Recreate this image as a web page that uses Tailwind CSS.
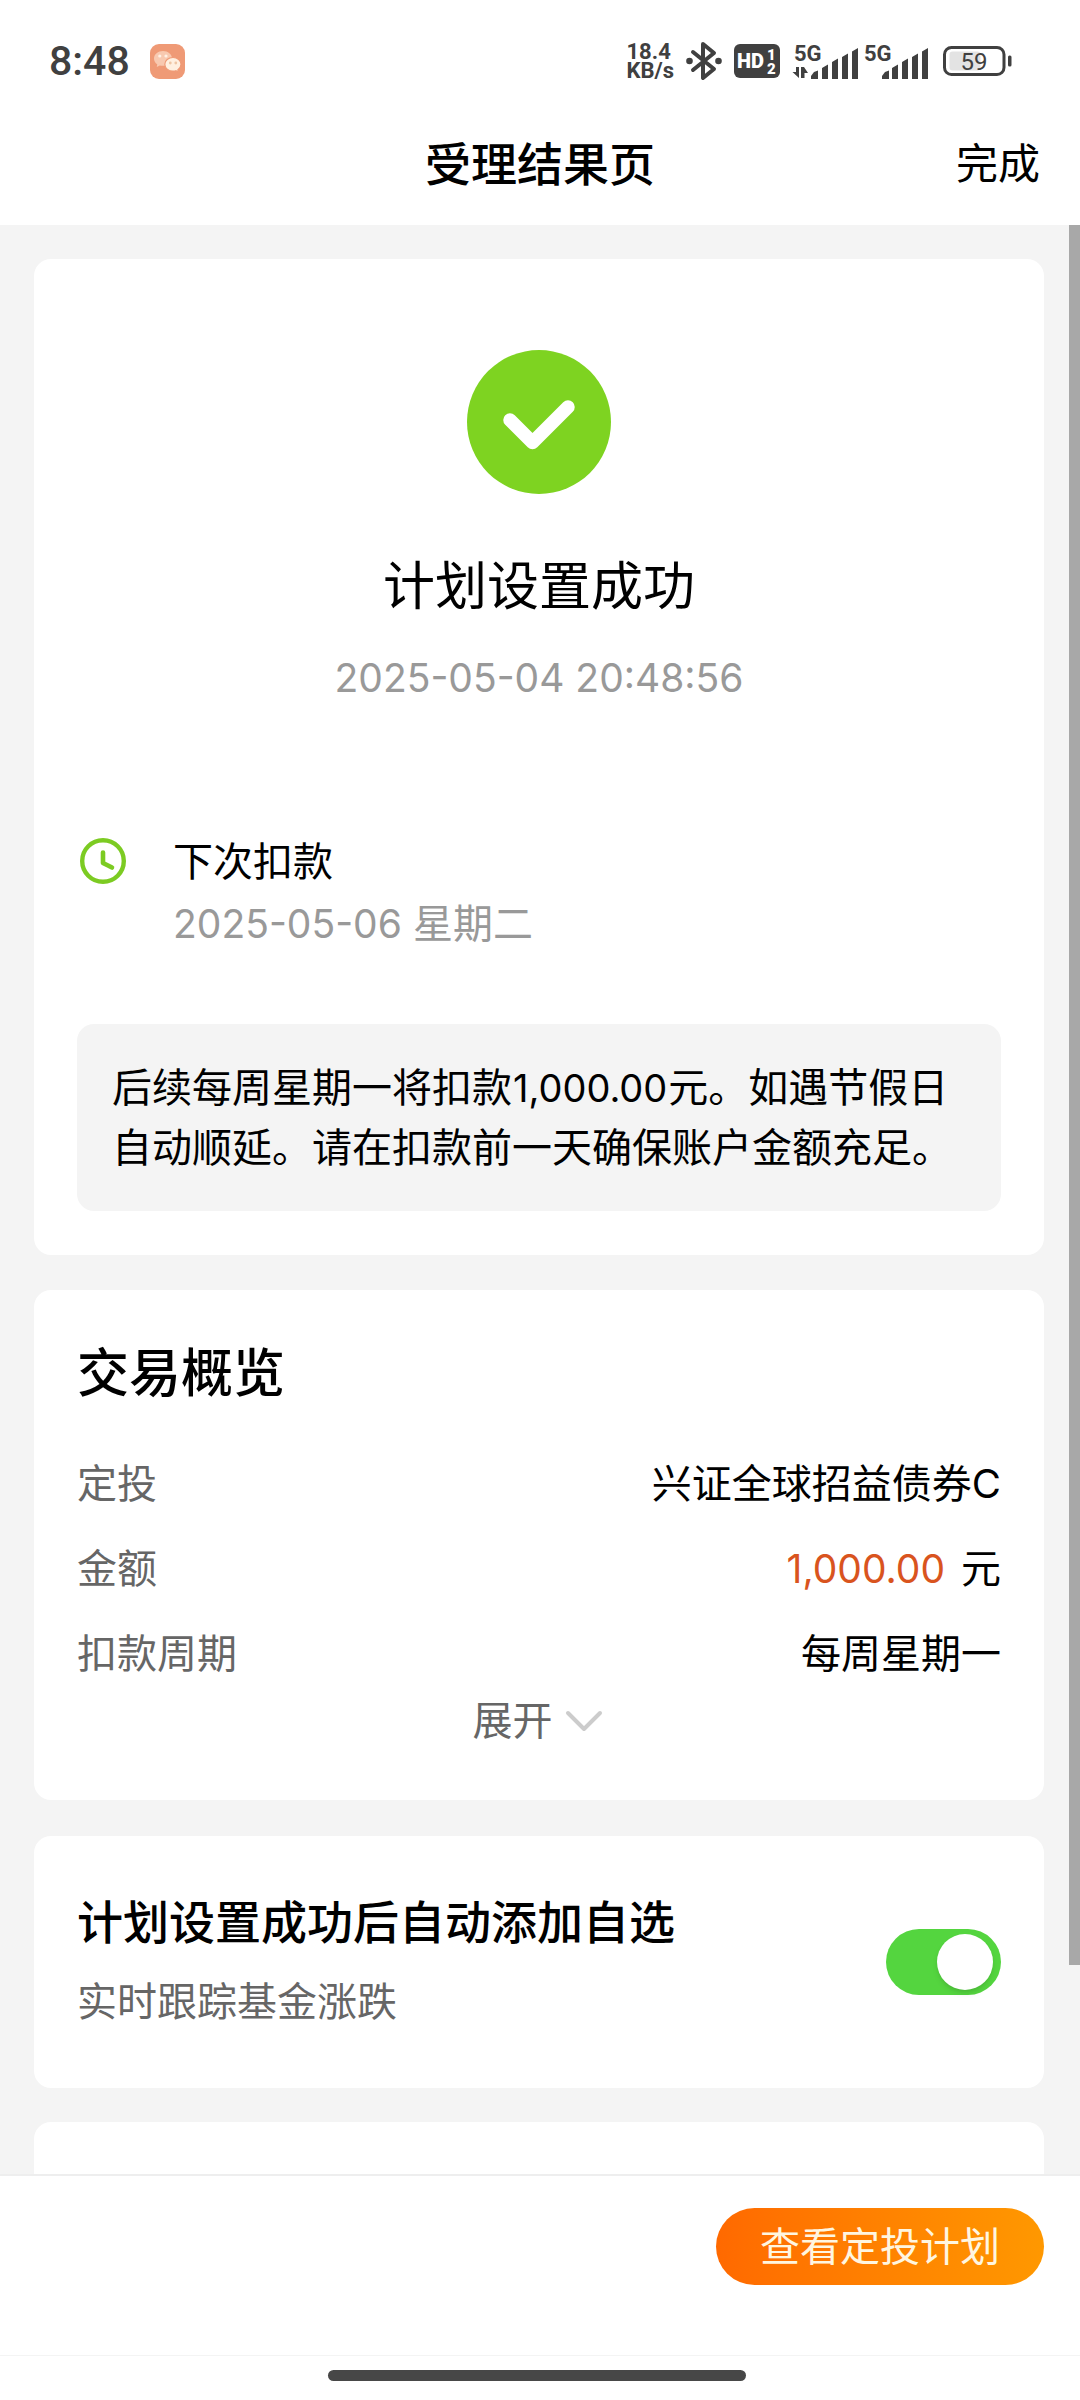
<!DOCTYPE html>
<html lang="zh-CN">
<head>
<meta charset="utf-8">
<meta name="viewport" content="width=device-width, initial-scale=1">
<title>受理结果页</title>
<script src="https://cdn.jsdelivr.net/npm/@tailwindcss/browser@4"></script>
</head>
<body class="flex h-screen flex-col overflow-hidden bg-white font-['Inter','Noto_Sans_CJK_SC',sans-serif] text-[40px] text-black">

<div class="flex h-[102px] shrink-0 items-center justify-between pt-5 pr-[68px] pl-[49px] font-['Roboto','Noto_Sans_CJK_SC',sans-serif] text-[#404040]">
  <div class="flex items-center gap-5">
    <time class="text-[41px] leading-none font-medium">8:48</time>
    <svg class="size-[35px]" viewBox="0 0 35 35" aria-hidden="true">
      <rect width="35" height="35" rx="9" fill="#ef9a76"/>
      <path d="M13 7c-5 0-9 3.300-9 7.500 0 2.400 1.200 4.400 3.200 5.800L6.800 23l3-1.600c1 .3 2.100.4 3.200.4 5 0 9-3.200 9-7.300S18 7 13 7z" fill="#f8c9b0"/>
      <circle cx="9.800" cy="12" r="1.600" fill="#fff0e4"/><circle cx="16" cy="12" r="1.600" fill="#fff0e4"/>
      <path d="M23 13.500c-4.600 0-8.200 3-8.200 6.800s3.600 6.800 8.200 6.800c1 0 2-.1 2.900-.4l2.500 1.300-.5-2.300c1.900-1.300 3.100-3.200 3.100-5.400 0-3.800-3.500-6.800-8-6.800z" fill="#fff0e0" stroke="#ef9a76" stroke-width="1.200"/>
      <circle cx="20.300" cy="19" r="1.400" fill="#efc6a4"/><circle cx="25.800" cy="19" r="1.400" fill="#efc6a4"/>
    </svg>
  </div>
  <div class="flex items-center gap-3">
    <div class="text-[22px] leading-[19px] font-bold"><div>18.4</div><div>KB/s</div></div>
    <svg class="h-[40px] w-[36px]" viewBox="0 0 36 40" fill="none" stroke="currentColor" stroke-width="4" stroke-linecap="round" stroke-linejoin="round" aria-label="蓝牙">
      <path d="M7 11l21 17-11 9V3l11 9L7 29"/>
      <circle cx="3.500" cy="20" r="3.300" fill="currentColor" stroke="none"/><circle cx="32.500" cy="20" r="3.300" fill="currentColor" stroke="none"/>
    </svg>
    <svg class="h-[34px] w-[46px]" viewBox="0 0 46 34" aria-label="HD">
      <rect width="46" height="34" rx="6" fill="currentColor"/>
      <g fill="#fff" font-weight="900" font-family="Roboto"><text x="3" y="24" font-size="20">HD</text><text x="33" y="16" font-size="15">1</text><text x="33" y="30" font-size="15">2</text></g>
    </svg>
    <div class="flex gap-[5px]">
      <svg class="h-[38px] w-[67px]" viewBox="0 0 67 38" fill="currentColor" aria-label="5G">
        <text x="2" y="19" font-size="22" font-weight="700" font-family="Roboto">5G</text>
        <path d="M4 25h3v11L.5 30H4zM9 25h3l4 6h-3.500v5H9z"/>
        <path d="M19 37v-3l3-4 4-1.500V37zM30 26l6-3.500V37h-6zM40 20l6-3.500V37h-6zM50 15l6-3.500V37h-6zM60 9.500L66 6v31h-6z"/>
      </svg>
      <svg class="h-[38px] w-[67px]" viewBox="0 0 67 38" fill="currentColor" aria-label="5G">
        <text x="0" y="19" font-size="22" font-weight="700" font-family="Roboto">5G</text>
        <path d="M18 37v-3l3-4 4-1.500V37zM28 26l6-3.500V37h-6zM38 20l6-3.500V37h-6zM48 15l6-3.500V37h-6zM58 9.500L64 6v31h-6z"/>
      </svg>
    </div>
    <svg class="h-[30px] w-[69px]" viewBox="0 0 69 30" aria-label="电量 59%">
      <rect x="1.500" y="1.500" width="59.500" height="27" rx="7" fill="none" stroke="currentColor" stroke-width="3"/>
      <rect x="6.500" y="5.500" width="31" height="19" rx="3" fill="#e3e3e3"/>
      <rect x="65" y="9.500" width="3.500" height="11" rx="1.500" fill="currentColor"/>
      <text x="31" y="24" text-anchor="middle" font-size="24" font-family="Roboto" fill="currentColor">59</text>
    </svg>
  </div>
</div>

<header class="grid h-[123px] shrink-0 grid-cols-[1fr_auto_1fr] items-center px-10">
  <h1 class="col-start-2 text-[46px] leading-none font-medium">受理结果页</h1>
  <button type="button" class="justify-self-end text-[42px] leading-none">完成</button>
</header>

<main class="relative min-h-0 flex-1 overflow-hidden bg-[#f4f4f4] pt-[34px] pr-9 pl-[34px]">
  <section class="rounded-[17px] bg-white px-[43px] pt-[91px] pb-[44px]">
    <div class="flex flex-col items-center">
      <svg class="size-[144px]" viewBox="0 0 144 144" aria-hidden="true">
        <circle cx="72" cy="72" r="72" fill="#7ed321"/>
        <path d="M43 70l22.500 22.500L101 57" fill="none" stroke="#fff" stroke-width="13.500" stroke-linecap="round" stroke-linejoin="round"/>
      </svg>
      <h2 class="mt-[59px] text-[52px] leading-[68px]">计划设置成功</h2>
      <time class="mt-[31px] text-[39px] leading-[52px] text-[#999]">2025-05-04 20:48:56</time>
    </div>
    <div class="mt-32 flex gap-[47px]">
      <svg class="mt-[6px] ml-[3px] size-[46px]" viewBox="0 0 46 46" fill="none" stroke="#7ccb22" aria-hidden="true">
        <circle cx="23" cy="23" r="20.800" stroke-width="4.400"/>
        <path d="M23 14.500V25l9 4.500" stroke-width="4.600" stroke-linecap="round" stroke-linejoin="round"/>
      </svg>
      <div>
        <h3 class="leading-[60px]">下次扣款</h3>
        <p class="leading-[64px] text-[#999]"><span class="text-[39px]">2025-05-06</span> 星期二</p>
      </div>
    </div>
    <p class="mt-[68px] rounded-[17px] bg-[#f4f4f4] px-[35px] py-[34px] leading-[59px]">后续每周星期一将扣款<span class="mx-px text-[38px]">1,000.00</span>元。如遇节假日自动顺延。请在扣款前一天确保账户金额充足。</p>
  </section>

  <section class="mt-[35px] rounded-[17px] bg-white px-[43px] pt-[50px] pb-[54px]">
    <h2 class="text-[52px] leading-[68px] font-medium">交易概览</h2>
    <dl class="mt-[33px] grid grid-cols-[auto_1fr] leading-[85px]">
      <dt class="text-[#666]">定投</dt><dd class="text-right">兴证全球招益债券C</dd>
      <dt class="text-[#666]">金额</dt><dd class="text-right"><span class="mr-4 text-[39px] text-[#d9541e]">1,000.00</span>元</dd>
      <dt class="text-[#666]">扣款周期</dt><dd class="text-right">每周星期一</dd>
    </dl>
    <button type="button" class="mx-auto flex items-center gap-3 leading-[50px] text-[#666]">展开
      <svg class="mr-[3px] h-[22px] w-[38px]" viewBox="0 0 38 22" fill="none" stroke="#ccc" stroke-width="4" stroke-linecap="round" stroke-linejoin="round" aria-hidden="true"><path d="M3 3l16 16L35 3"/></svg>
    </button>
  </section>

  <section class="mt-9 flex items-center justify-between rounded-[17px] bg-white px-[43px] py-[46px]">
    <label for="watch">
      <span class="block text-[46px] leading-20 font-medium">计划设置成功后自动添加自选</span>
      <span class="block leading-20 text-[#666]">实时跟踪基金涨跌</span>
    </label>
    <input id="watch" type="checkbox" role="switch" checked class="flex h-[66px] w-[115px] appearance-none items-center rounded-full bg-[#ddd] px-2 before:size-[56px] before:rounded-full before:bg-white before:shadow-md checked:justify-end checked:bg-[#54d53f]">
  </section>

  <section class="mt-[34px] h-40 rounded-[17px] bg-white"></section>

  <div class="absolute top-0 right-0 w-[11px] bg-[#a8a8a8]" style="height:89.3%"></div>
</main>

<footer class="shrink-0 border-t-2 border-[#eee] bg-white">
  <div class="flex h-[179px] justify-end px-9 pt-8">
    <button type="button" class="h-[77px] rounded-full bg-linear-to-r from-[#ff6900] to-[#ff9800] px-11 leading-none text-[#fff6e0]">查看定投计划</button>
  </div>
  <div class="flex h-[45px] justify-center border-t border-[#f4f4f4] pt-[14px] pr-[6px]">
    <div class="h-[11px] w-[418px] rounded-full bg-[#474747]"></div>
  </div>
</footer>
</body>
</html>
